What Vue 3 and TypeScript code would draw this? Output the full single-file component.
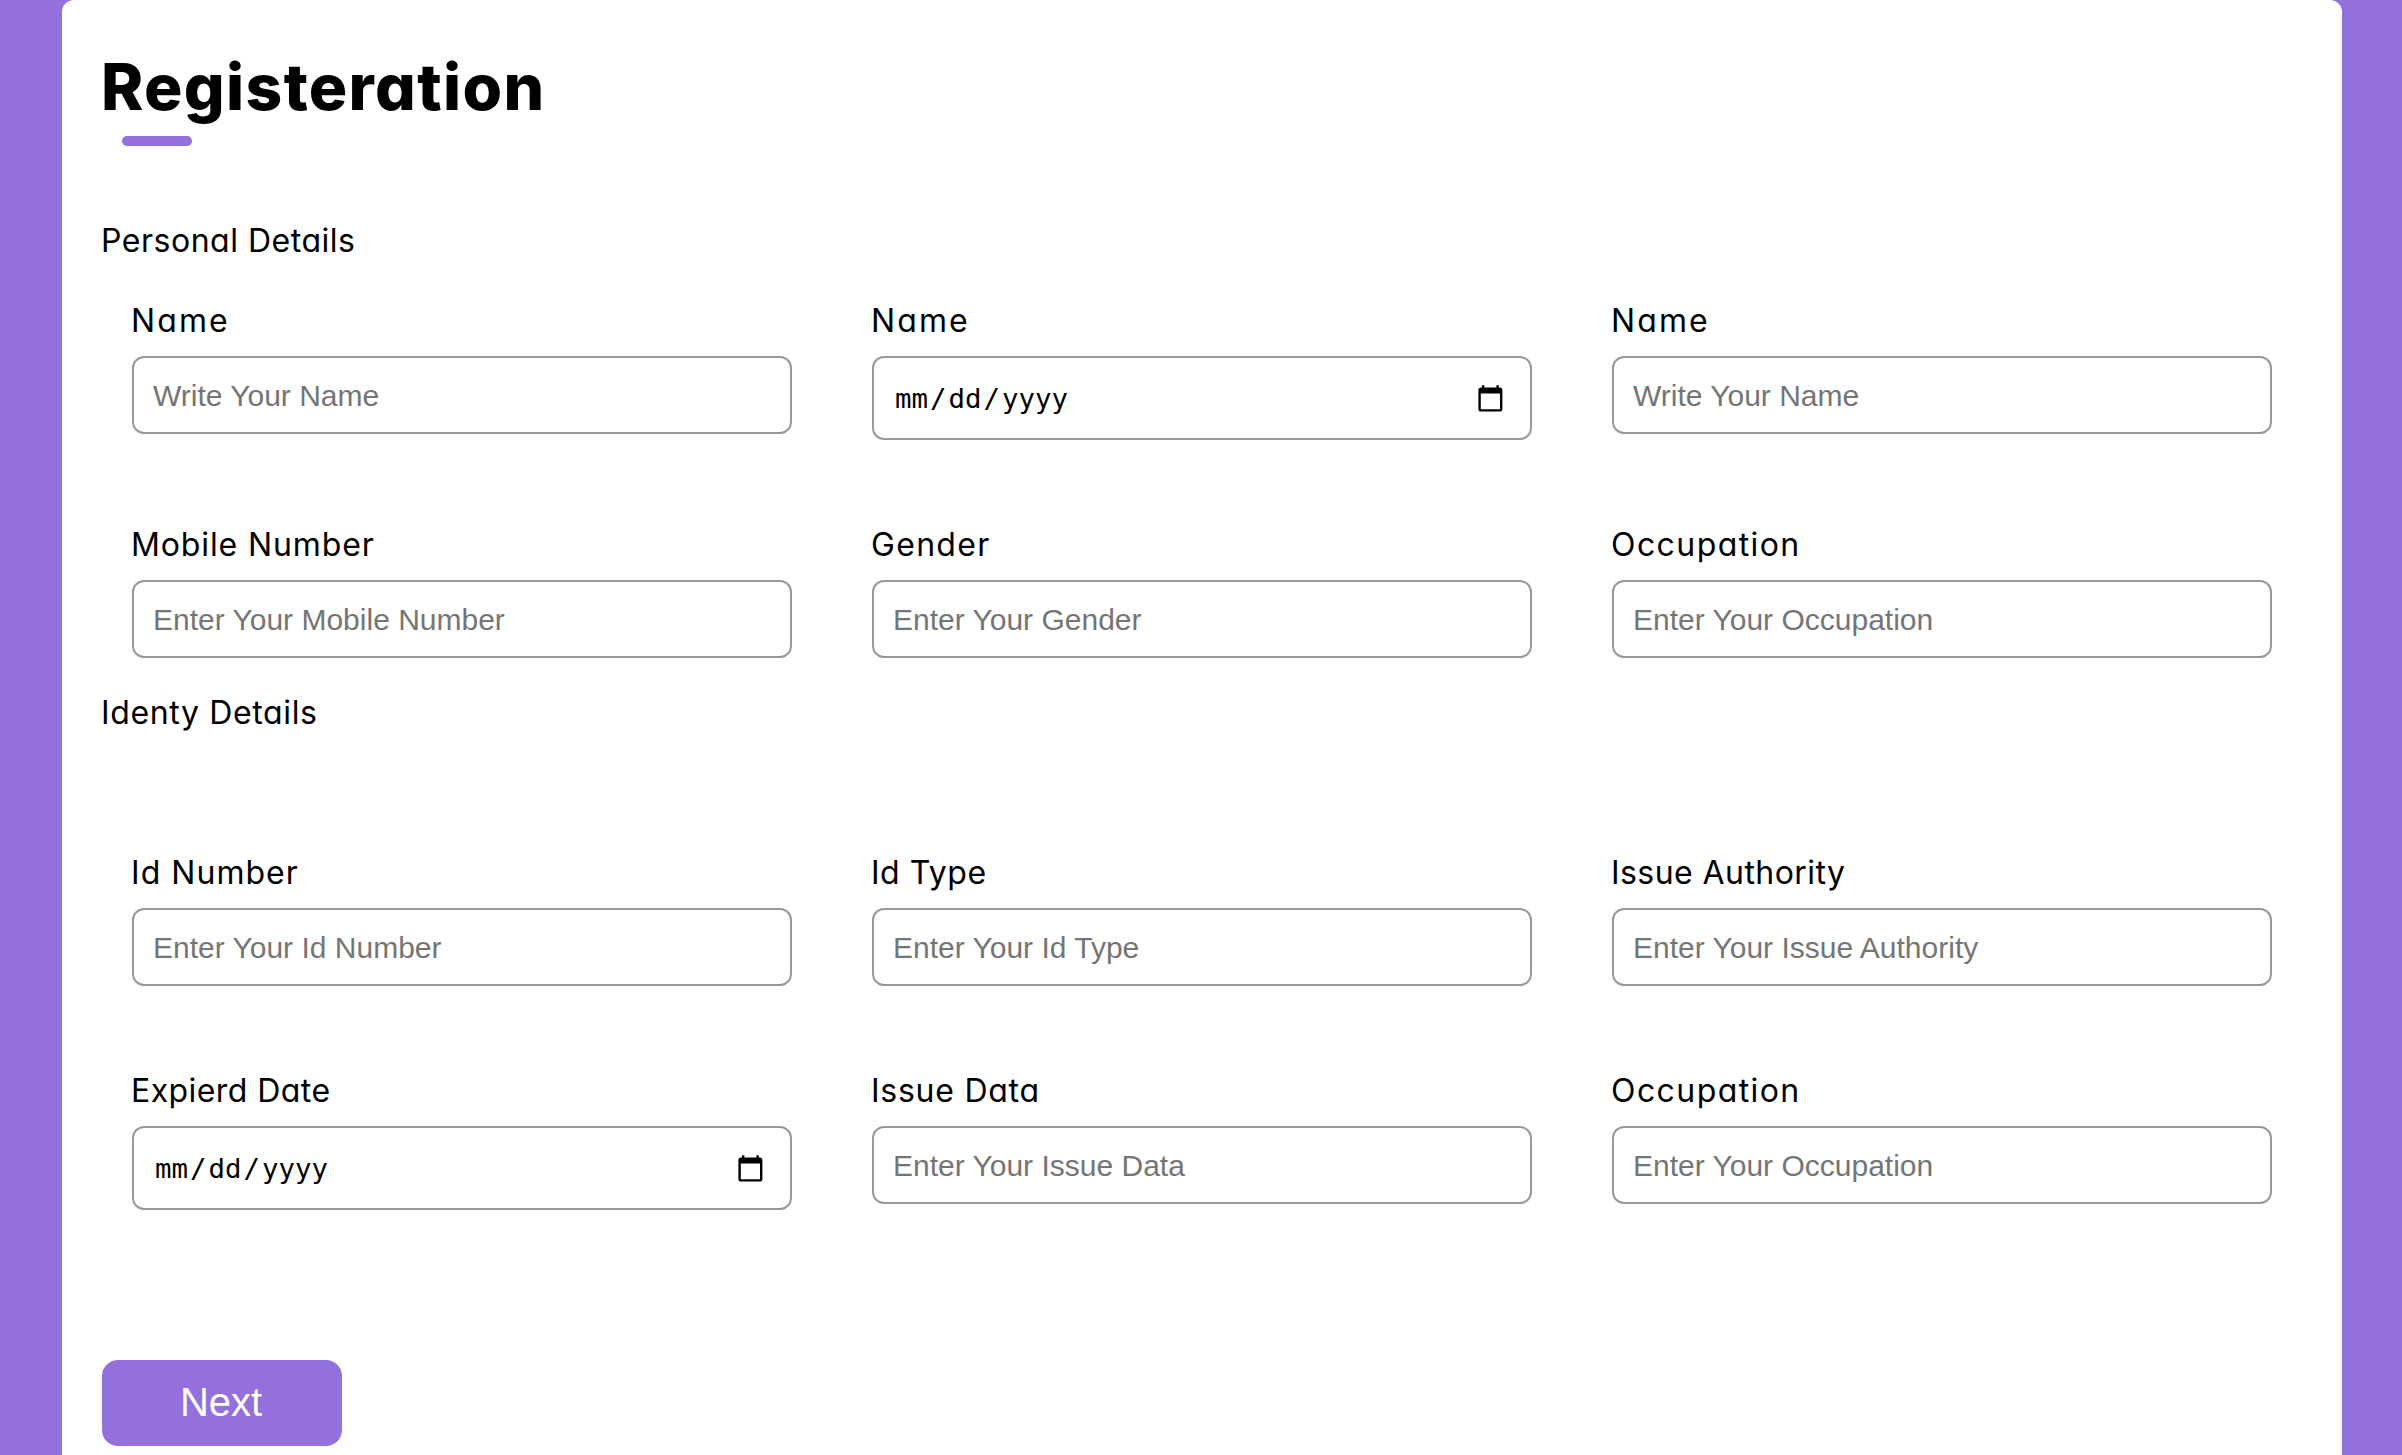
<script setup lang="ts">
interface Field {
  label: string
  tracking: number
  placeholder?: string
}

interface Section {
  title: string
  tracking: number
  className: string
  fields: Field[]
}

const sections: Section[] = [
  {
    title: 'Personal Details',
    tracking: 0.52,
    className: 'personal',
    fields: [
      { label: 'Name', tracking: 2.1, placeholder: 'Write Your Name' },
      { label: 'Name', tracking: 2.1 },
      { label: 'Name', tracking: 2.1, placeholder: 'Write Your Name' },
      { label: 'Mobile Number', tracking: 0.88, placeholder: 'Enter Your Mobile Number' },
      { label: 'Gender', tracking: 1.3, placeholder: 'Enter Your Gender' },
      { label: 'Occupation', tracking: 1.42, placeholder: 'Enter Your Occupation' },
    ],
  },
  {
    title: 'Identy Details',
    tracking: 0.63,
    className: 'identity',
    fields: [
      { label: 'Id Number', tracking: 1.04, placeholder: 'Enter Your Id Number' },
      { label: 'Id Type', tracking: 0.5, placeholder: 'Enter Your Id Type' },
      { label: 'Issue Authority', tracking: 0.43, placeholder: 'Enter Your Issue Authority' },
      { label: 'Expierd Date', tracking: 0.43 },
      { label: 'Issue Data', tracking: 0.74, placeholder: 'Enter Your Issue Data' },
      { label: 'Occupation', tracking: 1.42, placeholder: 'Enter Your Occupation' },
    ],
  },
]
</script>

<template>
  <main class="page">
    <div class="card">
      <h1 class="title">Registeration</h1>
      <div class="accent"></div>
      <form @submit.prevent>
        <section v-for="section in sections" :key="section.title" :class="section.className">
          <h2 class="section-title" :style="{ letterSpacing: section.tracking + 'px' }">{{ section.title }}</h2>
          <div class="fields">
            <div v-for="(field, i) in section.fields" :key="i" class="field">
              <label :style="{ letterSpacing: field.tracking + 'px' }">{{ field.label }}</label>
              <input v-if="field.placeholder" class="control" type="text" :placeholder="field.placeholder" />
              <div v-else class="control date">
                <span class="date-text"><span>mm</span><span>/</span><span>dd</span><span>/</span><span>yyyy</span></span>
                <svg class="calendar" viewBox="0 0 24 24" aria-hidden="true">
                  <path d="M20 3h-1V1h-2v2H7V1H5v2H4c-1.1 0-2 .9-2 2v16c0 1.1.9 2 2 2h16c1.1 0 2-.9 2-2V5c0-1.1-.9-2-2-2zm0 18H4V8h16v13z" />
                </svg>
              </div>
            </div>
          </div>
        </section>
        <button class="next" type="submit">Next</button>
      </form>
    </div>
  </main>
</template>

<style>
body {
  margin: 0;
  background: #9370db;
}
</style>

<style scoped>
.page {
  box-sizing: border-box;
  height: 1455px;
  padding: 0 60px 0 62px;
  overflow: hidden;
  background: #9370db;
  font-family: Inter, sans-serif;
  font-feature-settings: "cv11";
  color: #000;
}

.card {
  box-sizing: border-box;
  height: 1500px;
  padding: 40px;
  border-radius: 12px;
  background: #fff;
}

.title {
  margin: 0 0 0 -1px;
  font-size: 64px;
  font-weight: 800;
  line-height: 93px;
  letter-spacing: 1.36px;
}

.accent {
  width: 70px;
  height: 10px;
  margin: 3px 0 70px 20px;
  border-radius: 5px;
  background: #9370db;
}

.section-title {
  margin: 0 0 0 -1px;
  padding-top: 1px;
  font-size: 32px;
  font-weight: 400;
  line-height: 47px;
}

.fields {
  display: grid;
  grid-template-columns: repeat(3, 660px);
  gap: 80px;
  align-items: start;
  margin: 32px 0 0 30px;
}

.identity {
  margin-top: 30px;
}

.identity .fields {
  margin-top: 112px;
}

.field label {
  display: block;
  margin: 0 0 12px -1px;
  padding-top: 1px;
  font-size: 32px;
  font-weight: 400;
  line-height: 47px;
}

.control {
  display: block;
  box-sizing: border-box;
  width: 100%;
  height: 78px;
  padding: 21px 20px 19px 19px;
  border: 2px solid #999;
  border-radius: 12px;
  outline: none;
  background: #fff;
  font: 30px/34px "Liberation Sans", Arial, sans-serif;
}

.control::placeholder {
  color: #757575;
  opacity: 1;
}

.date {
  display: flex;
  align-items: center;
  justify-content: space-between;
  height: 84px;
  padding: 0 25px 0 19px;
  font: 27.4px/32px "DejaVu Sans Mono", monospace;
}

.date-text {
  display: flex;
  padding-top: 1px;
}

.date-text span:nth-child(odd) {
  padding: 0 2px;
}

.calendar {
  width: 28.8px;
  height: 28.8px;
  fill: #000;
}

.next {
  display: block;
  width: 240px;
  height: 86px;
  margin-top: 150px;
  padding: 0 2px 1px 0;
  border: 0;
  border-radius: 16px;
  background: #9370db;
  color: #fff;
  font: 40px "Liberation Sans", Arial, sans-serif;
}
</style>
